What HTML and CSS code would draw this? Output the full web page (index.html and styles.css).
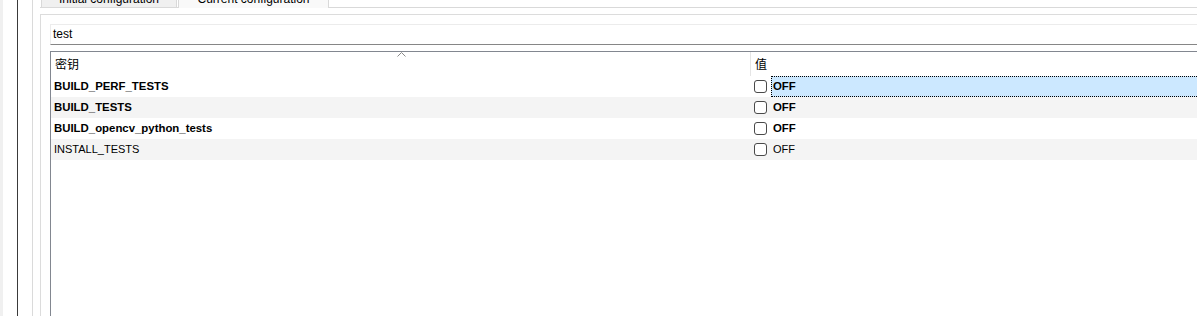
FILE: index.html
```html
<!DOCTYPE html>
<html lang="zh">
<head>
<meta charset="utf-8">
<title>CMake configuration</title>
<link rel="stylesheet" href="styles.css">
</head>
<body>
<div class="app">
  <div class="strip"></div>
  <div class="col-dark"></div>
  <div class="col-light"></div>
  <div class="col-gap"></div>
  <div class="tabwidget">
    <div class="tabbar">
      <div class="tab tab-initial">Initial configuration</div>
      <div class="tab tab-current selected">Current configuration</div>
    </div>
    <div class="pane">
      <div class="frame">
        <div class="search">test</div>
        <div class="tree">
          <div class="thead">
            <div class="th th-key">密钥<span class="sort"><svg width="9" height="5" viewBox="0 0 9 5"><polyline points="0.5,4.5 4.5,0.5 8.5,4.5" fill="none" stroke="#8a8a8a" stroke-width="1"/></svg></span></div>
            <div class="th th-val">值</div>
          </div>
          <div class="row">
            <div class="cell-key bold">BUILD_PERF_TESTS</div>
            <div class="cell-val"><span class="check"></span><span class="val bold current">OFF</span></div>
          </div>
          <div class="row alt">
            <div class="cell-key bold">BUILD_TESTS</div>
            <div class="cell-val"><span class="check"></span><span class="val bold">OFF</span></div>
          </div>
          <div class="row">
            <div class="cell-key bold">BUILD_opencv_python_tests</div>
            <div class="cell-val"><span class="check"></span><span class="val bold">OFF</span></div>
          </div>
          <div class="row alt">
            <div class="cell-key">INSTALL_TESTS</div>
            <div class="cell-val"><span class="check"></span><span class="val">OFF</span></div>
          </div>
        </div>
      </div>
    </div>
  </div>
</div>
</body>
</html>
```

FILE: styles.css
```css
html, body {
  margin: 0;
  padding: 0;
  background: #ffffff;
  overflow: hidden;
}

body {
  width: 1197px;
  height: 316px;
  font-family: "Liberation Sans", "Noto Sans CJK SC", sans-serif;
  font-size: 11px;
  color: #000000;
}

.app {
  display: flex;
  height: 316px;
}

.strip {
  width: 3px;
  background: #f0f0f0;
  flex: none;
}

.col-dark {
  width: 14px;
  border-right: 1px solid #3a3a3a;
  flex: none;
}

.col-light {
  width: 14px;
  border-right: 1px solid #dadada;
  flex: none;
}

.col-gap {
  width: 7px;
  flex: none;
}

.tabwidget {
  flex: 1;
  min-width: 0;
  display: flex;
  flex-direction: column;
}

.tabbar {
  display: flex;
  height: 20px;
  margin-top: -13px;
  padding-left: 1px;
  border-bottom: 1px solid #d9d9d9;
  flex: none;
}

.tab {
  box-sizing: border-box;
  height: 20px;
  border: 1px solid #d9d9d9;
  border-bottom: none;
  background: #f0f0f0;
  font-size: 12px;
  line-height: 14px;
  display: flex;
  align-items: flex-end;
  justify-content: center;
  padding-bottom: 1px;
}

.tab-initial {
  width: 136px;
}

.tab-current {
  width: 151px;
  margin-left: 1px;
}

.tab.selected {
  background: #f9f9f9;
  height: 21px;
  padding-bottom: 2px;
}

.pane {
  flex: 1;
  padding-top: 6px;
  display: flex;
  flex-direction: column;
}

.frame {
  flex: 1;
  border-top: 1px solid #dcdcdc;
  border-left: 1px solid #dcdcdc;
  padding: 9px 0 0 9px;
  display: flex;
  flex-direction: column;
}

.search {
  box-sizing: border-box;
  height: 21px;
  border: 1px solid #ececec;
  border-bottom-color: #868686;
  border-right: none;
  padding-left: 2px;
  font-size: 12px;
  line-height: 18px;
  flex: none;
}

.tree {
  flex: 1;
  margin-top: 6px;
  border-top: 1px solid #828790;
  border-left: 1px solid #828790;
}

.thead {
  display: flex;
  height: 24px;
}

.th {
  font-size: 12px;
  display: flex;
  align-items: center;
  padding-bottom: 1px;
  box-sizing: border-box;
}

.th-key {
  width: 699px;
  padding-left: 4px;
  position: relative;
}

.th-val {
  flex: 1;
  border-left: 1px solid #e5e5e5;
  padding-left: 4px;
}

.sort {
  position: absolute;
  top: 0;
  left: 346px;
  width: 9px;
  height: 5px;
  line-height: 0;
}

.row {
  display: flex;
  height: 21px;
}

.row.alt {
  background: #f4f4f4;
}

.cell-key {
  width: 700px;
  box-sizing: border-box;
  padding-left: 3px;
  display: flex;
  align-items: center;
  padding-bottom: 2px;
}

.cell-val {
  flex: 1;
  display: flex;
  align-items: center;
}

.check {
  box-sizing: border-box;
  width: 13px;
  height: 13px;
  margin-left: 3px;
  border: 1px solid #4a4a4a;
  border-radius: 3px;
  background: #ffffff;
  flex: none;
}

.val {
  flex: 1;
  box-sizing: border-box;
  height: 21px;
  margin-left: 4px;
  padding-left: 1px;
  padding-bottom: 2px;
  border-top: 1px solid transparent;
  border-bottom: 1px solid transparent;
  border-left: 1px solid transparent;
  display: flex;
  align-items: center;
}

.val.current {
  background: #cce8ff;
  border-top: 1px dotted #000000;
  border-bottom: 1px dotted #000000;
  border-left: 1px dotted #000000;
}

.bold {
  font-weight: bold;
  font-size: 11.4px;
}
```
